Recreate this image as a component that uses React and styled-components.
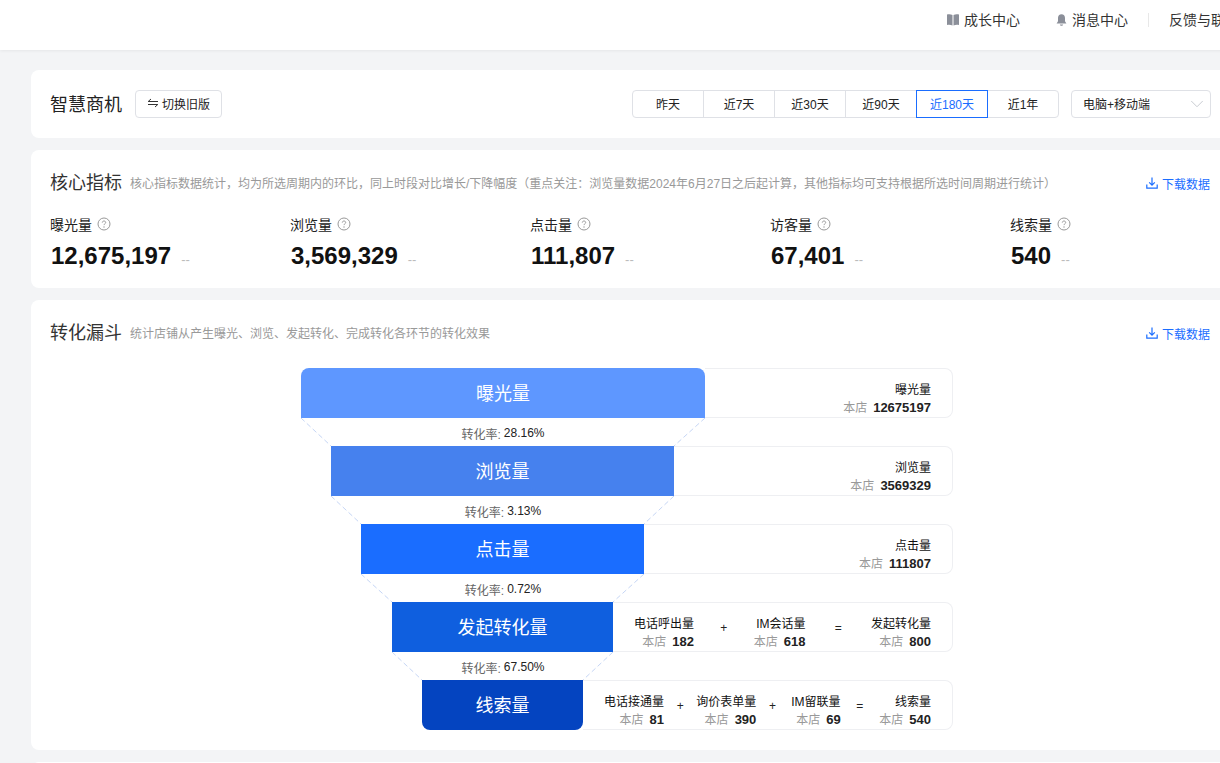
import React from 'react'
import styled, { createGlobalStyle } from 'styled-components'
import { ChevronDown } from 'lucide-react'

const GlobalStyle = createGlobalStyle`
  html, body {
    margin: 0;
    height: 763px;
    overflow: hidden;
    background: #f3f4f6;
  }
  body {
    font-family: "Liberation Sans", "Noto Sans CJK SC", sans-serif;
    color: #222;
  }
`

const Page = styled.div`
  width: 1260px;
`
const Header = styled.header`
  height: 50px;
  box-sizing: border-box;
  padding: 0 21px 10px 0;
  display: flex;
  align-items: center;
  justify-content: flex-end;
  background: #fff;
  box-shadow: 0 1px 3px rgba(0, 0, 0, 0.06);
`
const NavItem = styled.div`
  display: flex;
  align-items: center;
  gap: 4px;
  margin-left: 34px;
  font-size: 14px;
  line-height: 20px;
  color: #333;
  svg { flex: none; }
`
const NavDivider = styled.div`
  width: 1px;
  height: 14px;
  margin: 0 -14px 0 20px;
  background: #e8e8e8;
`
const Main = styled.main`
  padding: 20px 30px 0 31px;
  display: flex;
  flex-direction: column;
  gap: 12px;
`
const Card = styled.section`
  background: #fff;
  border-radius: 8px;
  box-sizing: border-box;
  padding: 20px 20px ${p => p.$bottom || 20}px;
`
const FilterBar = styled.div`
  display: flex;
  align-items: center;
  height: 28px;
`
const PageTitle = styled.h1`
  margin: 0 13px 2px -1px;
  font-size: 18px;
  font-weight: 400;
  color: #222;
`
const SwitchButton = styled.button`
  height: 28px;
  width: 87px;
  padding: 0 0 2px;
  display: flex;
  align-items: center;
  justify-content: center;
  gap: 3px;
  font: inherit;
  font-size: 12px;
  color: #222;
  background: #fff;
  border: 1px solid #dfe1e6;
  border-radius: 4px;
`
const Tabs = styled.div`
  display: flex;
  margin-left: auto;
  border-radius: 4px;
`
const Tab = styled.div`
  width: 70px;
  height: 24px;
  padding-bottom: 2px;
  margin-left: -1px;
  display: flex;
  align-items: center;
  justify-content: center;
  font-size: 12px;
  color: ${p => (p.$active ? '#1a6dff' : '#222')};
  border: 1px solid ${p => (p.$active ? '#1a6dff' : '#dfe1e6')};
  position: ${p => (p.$active ? 'relative' : 'static')};
  &:first-child { border-radius: 4px 0 0 4px; margin-left: 0; }
  &:last-child { border-radius: 0 4px 4px 0; }
`
const Select = styled.div`
  width: 140px;
  height: 28px;
  box-sizing: border-box;
  margin: 0 -1px 0 12px;
  padding: 0 2px 2px 11px;
  display: flex;
  align-items: center;
  justify-content: space-between;
  font-size: 12px;
  color: #222;
  border: 1px solid #dfe1e6;
  border-radius: 4px;
  svg { color: #c4c7ce; margin-top: 2px; }
`
const SectionHead = styled.div`
  display: flex;
  align-items: center;
  height: 24px;
  margin-left: -1px;
`
const SectionTitle = styled.h2`
  margin: 0 8px 2px 0;
  font-size: 18px;
  font-weight: 400;
  color: #333;
`
const SectionDesc = styled.span`
  font-size: 12px;
  color: #999;
`
const DownloadLink = styled.a`
  margin: 2px 0 0 auto;
  display: flex;
  align-items: center;
  gap: 4px;
  font-size: 12px;
  color: #1a6dff;
`
const Metrics = styled.div`
  display: grid;
  grid-template-columns: repeat(5, 240px);
  margin-top: 20px;
`
const Metric = styled.div`
  display: flex;
  flex-direction: column;
`
const MetricLabel = styled.div`
  display: flex;
  align-items: center;
  gap: 5px;
  height: 20px;
  margin-left: -1px;
  font-size: 14px;
  color: #222;
`
const MetricValueRow = styled.div`
  display: flex;
  align-items: baseline;
  gap: 10px;
  margin-top: 8px;
`
const MetricValue = styled.div`
  font-size: 24px;
  line-height: 28px;
  font-weight: 700;
  color: #111;
`
const MetricDash = styled.span`
  font-size: 13px;
  color: #bbb;
`
const Funnel = styled.div`
  width: 652px;
  margin: 24px 0 0 250px;
  display: flex;
  flex-direction: column;
`
const FunnelRow = styled.div`
  display: flex;
  height: 50px;
  padding-left: ${p => p.$left}px;
`
const Bar = styled.div`
  flex: none;
  width: ${p => p.$width}px;
  padding-bottom: 2px;
  box-sizing: border-box;
  display: flex;
  align-items: center;
  justify-content: center;
  font-size: 18px;
  color: #fff;
  background: ${p => p.$color};
  border-radius: ${p => p.$radius || '0'};
`
const Detail = styled.div`
  flex: 1;
  min-width: 0;
  box-sizing: border-box;
  padding: 13px 21px 0;
  display: flex;
  align-items: center;
  justify-content: ${p => (p.$single ? 'flex-end' : 'space-between')};
  border: 1px solid #eeeff2;
  border-left: none;
  border-radius: 0 8px 8px 0;
`
const Stat = styled.div`
  display: flex;
  flex-direction: column;
  align-items: flex-end;
  min-width: 52px;
  font-size: 12px;
  line-height: 17px;
  color: #111;
`
const StatLine = styled.div`
  display: flex;
  align-items: baseline;
  gap: 6px;
  color: #999;
  b { color: #222; font-size: 13px; }
`
const Operator = styled.span`
  margin: 0 ${p => (p.$equals ? 3 : 0)}px 11px;
  font-size: 12px;
  color: #222;
`
const Gap = styled.div`
  position: relative;
  width: 404px;
  height: 28px;
  box-sizing: border-box;
  padding-top: 2px;
  display: flex;
  align-items: center;
  justify-content: center;
  font-size: 12px;
  color: #666;
  span { color: #222; margin-left: 3px; }
`
const Connector = styled.svg`
  position: absolute;
  inset: 0;
  overflow: visible;
  pointer-events: none;
`

const BookIcon = () => (
  <svg width="14" height="14" viewBox="0 0 14 14">
    <path d="M1 1.500c2-.5 4-.3 5.500.4v10.600C5 11.800 3 11.600 1 12z" fill="#8b8f99" />
    <path d="M13 1.500c-2-.5-4-.3-5.500.4v10.600c1.500-.7 3.500-.9 5.500-.5z" fill="#8b8f99" />
  </svg>
)

const BellIcon = () => (
  <svg width="14" height="14" viewBox="-1 0 14 14">
    <path d="M6.500 1.200c-2.200 0-3.500 1.700-3.500 3.800v3.300L1.600 10.400h9.800L10 8.300V5c0-2.100-1.300-3.800-3.500-3.800z" fill="#8b8f99" />
    <path d="M4.800 11.400h3.400c-.2.900-.9 1.400-1.700 1.400s-1.500-.5-1.700-1.400z" fill="#8b8f99" />
  </svg>
)

const SwapIcon = () => (
  <svg width="12" height="12" viewBox="0 0 12 12" fill="none" stroke="#333" strokeWidth="1">
    <path d="M11 4.500H1.200L4 2" />
    <path d="M1 7.500h9.800L8 10" />
  </svg>
)

const HelpIcon = () => (
  <svg width="14" height="14" viewBox="0 0 14 14" fill="none">
    <circle cx="7" cy="7" r="6" stroke="#999" />
    <path d="M5.300 5.600c0-1 .8-1.600 1.700-1.600s1.700.6 1.700 1.500c0 1.300-1.700 1.300-1.700 2.600" stroke="#999" />
    <circle cx="7" cy="10" r=".7" fill="#999" />
  </svg>
)

const DownloadIcon = () => (
  <svg width="12" height="12" viewBox="0 0 12 12" fill="none" stroke="#1a6dff" strokeWidth="1.200">
    <path d="M6 .6v7.400M3.200 5.400 6 8.200l2.800-2.800" />
    <path d="M.8 7.500v3.700h10.400V7.500" />
  </svg>
)

const metrics = [
  ['曝光量', '12,675,197'],
  ['浏览量', '3,569,329'],
  ['点击量', '111,807'],
  ['访客量', '67,401'],
  ['线索量', '540'],
]

const Single = ({ label, value }) => (
  <Stat>
    {label}
    <StatLine>本店<b>{value}</b></StatLine>
  </Stat>
)

const steps = [
  { name: '曝光量', left: 0, width: 404, color: '#5e97ff', radius: '8px 8px 0 0', rate: '28.16%',
    items: [['曝光量', '12675197']] },
  { name: '浏览量', left: 30, width: 343, color: '#4681ee', rate: '3.13%',
    items: [['浏览量', '3569329']] },
  { name: '点击量', left: 60, width: 283, color: '#1a6dff', rate: '0.72%',
    items: [['点击量', '111807']] },
  { name: '发起转化量', left: 91, width: 221, color: '#0f5fdf', rate: '67.50%',
    items: [['电话呼出量', '182'], '+', ['IM会话量', '618'], '=', ['发起转化量', '800']] },
  { name: '线索量', left: 121, width: 161, color: '#0444c0', radius: '0 0 8px 8px',
    items: [['电话接通量', '81'], '+', ['询价表单量', '390'], '+', ['IM留联量', '69'], '=', ['线索量', '540']] },
]

export default function App() {
  return (
    <Page>
      <GlobalStyle />
      <Header>
        <NavItem><BookIcon />成长中心</NavItem>
        <NavItem><BellIcon />消息中心</NavItem>
        <NavDivider />
        <NavItem>反馈与联系</NavItem>
      </Header>
      <Main>
        <Card>
          <FilterBar>
            <PageTitle>智慧商机</PageTitle>
            <SwitchButton><SwapIcon />切换旧版</SwitchButton>
            <Tabs>
              {['昨天', '近7天', '近30天', '近90天', '近180天', '近1年'].map(t => (
                <Tab key={t} $active={t === '近180天'}>{t}</Tab>
              ))}
            </Tabs>
            <Select>电脑+移动端<ChevronDown size={22} strokeWidth={1} /></Select>
          </FilterBar>
        </Card>

        <Card $bottom={18}>
          <SectionHead>
            <SectionTitle>核心指标</SectionTitle>
            <SectionDesc>核心指标数据统计，均为所选周期内的环比，同上时段对比增长/下降幅度（重点关注：浏览量数据2024年6月27日之后起计算，其他指标均可支持根据所选时间周期进行统计）</SectionDesc>
            <DownloadLink><DownloadIcon />下载数据</DownloadLink>
          </SectionHead>
          <Metrics>
            {metrics.map(([label, value]) => (
              <Metric key={label}>
                <MetricLabel>{label}<HelpIcon /></MetricLabel>
                <MetricValueRow>
                  <MetricValue>{value}</MetricValue>
                  <MetricDash>--</MetricDash>
                </MetricValueRow>
              </Metric>
            ))}
          </Metrics>
        </Card>

        <Card>
          <SectionHead>
            <SectionTitle>转化漏斗</SectionTitle>
            <SectionDesc>统计店铺从产生曝光、浏览、发起转化、完成转化各环节的转化效果</SectionDesc>
            <DownloadLink><DownloadIcon />下载数据</DownloadLink>
          </SectionHead>
          <Funnel>
            {steps.map((s, i) => {
              const next = steps[i + 1]
              return (
                <React.Fragment key={s.name}>
                  <FunnelRow $left={s.left}>
                    <Bar $width={s.width} $color={s.color} $radius={s.radius}>{s.name}</Bar>
                    <Detail $single={s.items.length === 1}>
                      {s.items.map((it, j) => (
                        typeof it === 'string'
                          ? <Operator key={j} $equals={it === '='}>{it}</Operator>
                          : <Single key={j} label={it[0]} value={it[1]} />
                      ))}
                    </Detail>
                  </FunnelRow>
                  {next && (
                    <Gap>
                      <Connector width="404" height="28">
                        <path
                          d={`M${s.left} 0L${next.left} 28M${s.left + s.width} 0L${next.left + next.width} 28`}
                          stroke="#c6d6f5"
                          strokeDasharray="5 3"
                          fill="none"
                        />
                      </Connector>
                      转化率:<span>{s.rate}</span>
                    </Gap>
                  )}
                </React.Fragment>
              )
            })}
          </Funnel>
        </Card>
        <Card $bottom={100} />
      </Main>
    </Page>
  )
}
